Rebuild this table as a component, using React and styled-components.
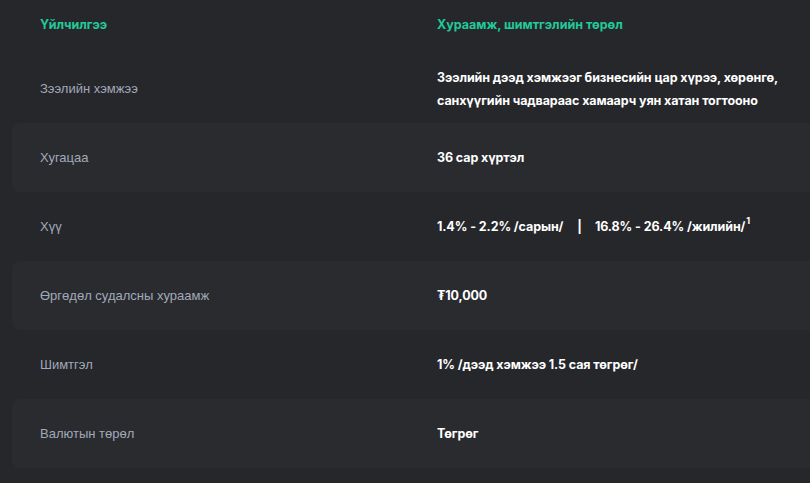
import React from "react";
import styled, { createGlobalStyle } from "styled-components";

const Global = createGlobalStyle`
  html, body { margin: 0; padding: 0; background: #26272b; overflow: hidden; }
  body { font-family: "Liberation Sans", Arial, sans-serif; }
`;

const Page = styled.div`
  width: 810px;
  height: 483px;
  background: #26272b;
  overflow: hidden;
`;

const Table = styled.div`
  width: 860px;
  margin-left: 12px;
  display: flex;
  flex-direction: column;
`;

const Row = styled.div`
  display: grid;
  grid-template-columns: 397px 1fr;
  align-items: center;
  padding-left: 28px;
  height: ${(p) => (p.$head ? "54px" : "69px")};
  box-sizing: border-box;
  padding-bottom: ${(p) => (p.$head ? "4px" : "0")};
  background: ${(p) => (p.$striped ? "#2a2b2f" : "transparent")};
  border-radius: 8px;
`;

const Head = styled.div`
  font-family: Inter, "Noto Sans", sans-serif;
  font-weight: 700;
  font-size: 12.5px;
  line-height: 16px;
  color: #22c99b;
`;

const Label = styled.div`
  font-family: "Liberation Sans", Arial, sans-serif;
  font-size: 13px;
  line-height: 16px;
  color: #a1a9b9;
`;

const Value = styled.div`
  font-family: Inter, "Noto Sans", sans-serif;
  font-weight: 700;
  font-size: 12.5px;
  line-height: 23px;
  color: #ffffff;
  max-width: 360px;
  letter-spacing: -0.1px;
`;

const Sep = styled.span`
  display: inline-block;
  margin: 0 13px 0 14px;
`;

const Sup = styled.sup`
  font-size: 9px;
  line-height: 0;
  vertical-align: 7px;
  margin-left: 1px;
`;

const rows = [
  ["Зээлийн хэмжээ", "Зээлийн дээд хэмжээг бизнесийн цар хүрээ, хөрөнгө, санхүүгийн чадвараас хамаарч уян хатан тогтооно"],
  ["Хугацаа", "36 сар хүртэл"],
  [
    "Хүү",
    <>
      1.4% - 2.2% /сарын/<Sep>|</Sep>16.8% - 26.4% /жилийн/<Sup>1</Sup>
    </>,
  ],
  ["Өргөдөл судалсны хураамж", "₮10,000"],
  ["Шимтгэл", "1% /дээд хэмжээ 1.5 сая төгрөг/"],
  ["Валютын төрөл", "Төгрөг"],
];

export default function App() {
  return (
    <Page>
      <Global />
      <Table>
        <Row $head>
          <Head>Үйлчилгээ</Head>
          <Head>Хураамж, шимтгэлийн төрөл</Head>
        </Row>
        {rows.map(([l, v], i) => (
          <Row key={i} $striped={i % 2 === 1}>
            <Label>{l}</Label>
            <Value>{v}</Value>
          </Row>
        ))}
      </Table>
    </Page>
  );
}
